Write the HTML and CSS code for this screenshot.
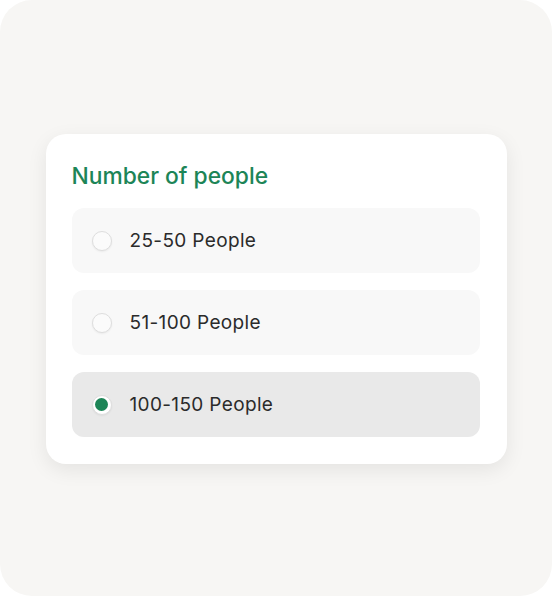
FILE: index.html
```html
<!DOCTYPE html>
<html>
<head>
  <title>Number of people</title>
  <link rel="stylesheet" href="styles.css">
</head>
<body>
  <div class="frame">
    <div class="card">
      <div class="card-title">Number of people</div>
      <div class="options">
        <label class="option">
          <span class="radio"></span>
          <span class="option-text">25-50 People</span>
        </label>
        <label class="option">
          <span class="radio"></span>
          <span class="option-text">51-100 People</span>
        </label>
        <label class="option selected">
          <span class="radio"></span>
          <span class="option-text">100-150 People</span>
        </label>
      </div>
    </div>
  </div>
</body>
</html>
```
FILE: styles.css
```css
/* Number of people picker */

html,
body {
  margin: 0;
  padding: 0;
  background: #fff;
}

body {
  font-family: Inter, "Noto Sans", sans-serif;
}

.frame {
  width: 552px;
  height: 596px;
  background: #f7f6f4;
  border-radius: 32px;
  display: flex;
  align-items: center;
  justify-content: center;
}

.card {
  width: 461px;
  box-sizing: border-box;
  margin-top: 2px;
  padding: 28px 27px 27px 26px;
  background: #fff;
  border-radius: 20px;
  box-shadow: 0 6px 20px rgba(0, 0, 0, 0.08);
}

.card-title {
  font-size: 22.8px;
  line-height: 28px;
  font-weight: 500;
  color: #1d8557;
  margin-bottom: 18px;
}

.options {
  display: flex;
  flex-direction: column;
  gap: 17px;
}

.option {
  display: flex;
  align-items: center;
  gap: 18px;
  height: 65px;
  padding-left: 20px;
  background: #f8f8f8;
  border-radius: 12px;
  cursor: pointer;
}

.option.selected {
  background: #e9e9e9;
}

.radio {
  width: 20px;
  height: 20px;
  box-sizing: border-box;
  border: 1.5px solid #dedede;
  border-radius: 50%;
  background: #fbfbfb;
  box-shadow: 0 1px 2px rgba(0, 0, 0, 0.06);
  display: flex;
  align-items: center;
  justify-content: center;
}

.option.selected .radio {
  background: #fff;
}

.option.selected .radio::after {
  content: "";
  width: 13px;
  height: 13px;
  border-radius: 50%;
  background: #1d8557;
}

.option-text {
  font-size: 19px;
  letter-spacing: 0.35px;
  color: #2b2b2b;
}
```
